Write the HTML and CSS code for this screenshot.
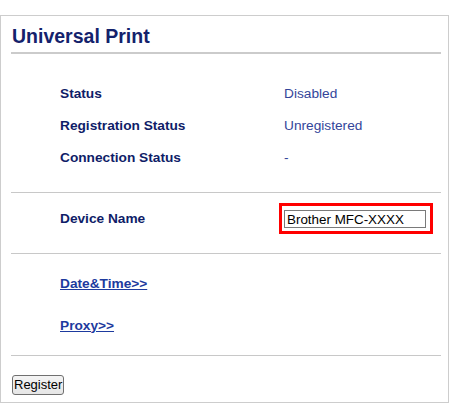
FILE: index.html
```html
<!DOCTYPE html>
<html>
<head>
<meta charset="utf-8">
<link rel="stylesheet" href="styles.css">
</head>
<body>
<div class="panel">
  <h1 class="title">Universal Print</h1>
  <div class="section rows">
    <div class="row"><span class="label">Status</span><span class="value">Disabled</span></div>
    <div class="row"><span class="label">Registration Status</span><span class="value">Unregistered</span></div>
    <div class="row"><span class="label">Connection Status</span><span class="value">-</span></div>
  </div>
  <div class="sep"></div>
  <div class="section device">
    <div class="row"><span class="label">Device Name</span><span class="highlight"><input class="field" type="text" value="Brother MFC-XXXX"></span></div>
  </div>
  <div class="sep"></div>
  <div class="section links">
    <div class="row"><a class="link" href="#">Date&amp;Time&gt;&gt;</a></div>
    <div class="row"><a class="link" href="#">Proxy&gt;&gt;</a></div>
  </div>
  <div class="sep"></div>
  <div class="actions"><button class="btn" type="button">Register</button></div>
</div>
</body>
</html>
```
FILE: styles.css
```css
html, body {
  margin: 0;
  padding: 0;
  background: #ffffff;
}
body {
  font-family: "Liberation Sans", Arial, sans-serif;
}
.panel {
  margin-top: 15px;
  width: 449px;
  box-sizing: border-box;
  border: 1px solid #cdcdcd;
  padding: 0 7px 7px 10px;
}
.title {
  margin: 0;
  padding: 8px 0 4px 1px;
  font-size: 19.5px;
  line-height: 24px;
  font-weight: bold;
  color: #14226c;
  border-bottom: 2px solid #cbcbcb;
}
.section {
  display: flex;
  flex-direction: column;
}
.rows {
  padding: 23px 0 19px 49px;
}
.rows .row {
  height: 32px;
}
.row {
  display: flex;
  align-items: center;
}
.label {
  width: 224px;
  flex: none;
  font-size: 13.7px;
  font-weight: bold;
  color: #0f1d68;
}
.value {
  font-size: 13.7px;
  color: #33459a;
}
.sep {
  height: 1px;
  background: #c8c8c8;
}
.device {
  padding: 10px 0 19px 49px;
}
.device .row {
  height: 31px;
}
.highlight {
  display: flex;
  margin-left: -5px;
  border: 3px solid #ff0000;
  padding: 4px 4px 3px 2px;
}
.field {
  box-sizing: border-box;
  width: 142px;
  height: 18px;
  margin: 0;
  padding: 0 0 0 2px;
  border: 1px solid #7a7a7a;
  font-family: "Liberation Sans", Arial, sans-serif;
  font-size: 13.4px;
  color: #000;
  background: #fff;
}
.links {
  padding: 13px 0 14px 49px;
  gap: 10px;
}
.links .row {
  height: 32px;
}
.link {
  font-size: 13.7px;
  font-weight: bold;
  color: #1d3a9e;
  text-decoration: underline;
}
.actions {
  padding-top: 19px;
  display: flex;
}
.btn {
  margin: 0 0 0 1px;
  height: 20px;
  padding: 0 1px;
  border: 1px solid #707070;
  border-radius: 3px;
  background: linear-gradient(#f4f4f4, #e6e6e6);
  font-family: "Liberation Sans", Arial, sans-serif;
  font-size: 13px;
  color: #000;
  line-height: 16px;
}
```
